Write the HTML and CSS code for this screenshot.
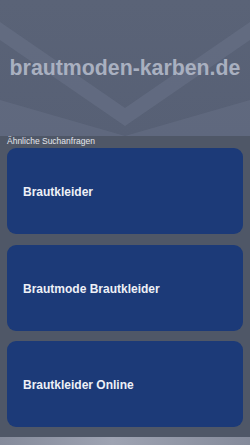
FILE: index.html
```html
<!DOCTYPE html>
<html lang="de">
<head>
    <meta charset="UTF-8">
    <meta name="viewport" content="width=device-width, initial-scale=1.0">
    <title>brautmoden-karben.de</title>
    <link rel="stylesheet" href="styles.css">
</head>
<body>

    <header class="hero">
        <svg class="hero-bg" viewBox="0 0 250 136" preserveAspectRatio="none">
            <polygon points="0,22 125,108 250,22 250,40 125,126 0,40" fill="#6a7388" opacity="0.55"/>
            <polygon points="0,100 125,136 250,100 250,136 0,136" fill="#6b7489" opacity="0.45"/>
        </svg>
        <h1>brautmoden-karben.de</h1>
    </header>

    <section class="related">
        <p class="label">Ähnliche Suchanfragen</p>
        <a class="card" href="#">Brautkleider</a>
        <a class="card" href="#">Brautmode Brautkleider</a>
        <a class="card" href="#">Brautkleider Online</a>
    </section>

    <footer class="bottom"></footer>

</body>
</html>
```

FILE: styles.css
```css
body {
    margin: 0;
    font-family: "Liberation Sans", Arial, sans-serif;
    background-color: #4f5767;
}
.hero {
    position: relative;
    height: 136px;
    background: linear-gradient(#5a6377, #576075);
    display: flex;
    align-items: center;
    justify-content: center;
    overflow: hidden;
}
.hero-bg {
    position: absolute;
    top: 0;
    left: 0;
    width: 100%;
    height: 100%;
}
.hero h1 {
    position: relative;
    margin: 0;
    font-size: 21.3px;
    font-weight: bold;
    color: #a9b0c0;
}
.related {
    padding: 0 7px 10px;
    display: flex;
    flex-direction: column;
    gap: 10.5px;
}
.label {
    margin: 0 0 -8.5px;
    font-size: 8.5px;
    line-height: 10px;
    color: #e4e6ec;
}
.card {
    box-sizing: border-box;
    height: 86px;
    border-radius: 9px;
    background-color: #1c3a78;
    color: #eef0f6;
    font-size: 12px;
    font-weight: bold;
    text-decoration: none;
    display: flex;
    align-items: center;
    padding: 2px 0 0 16px;
}
.bottom {
    height: 10px;
    background: linear-gradient(90deg, #858b9b, #9ea3b2 45%, #858b9b);
}
```
